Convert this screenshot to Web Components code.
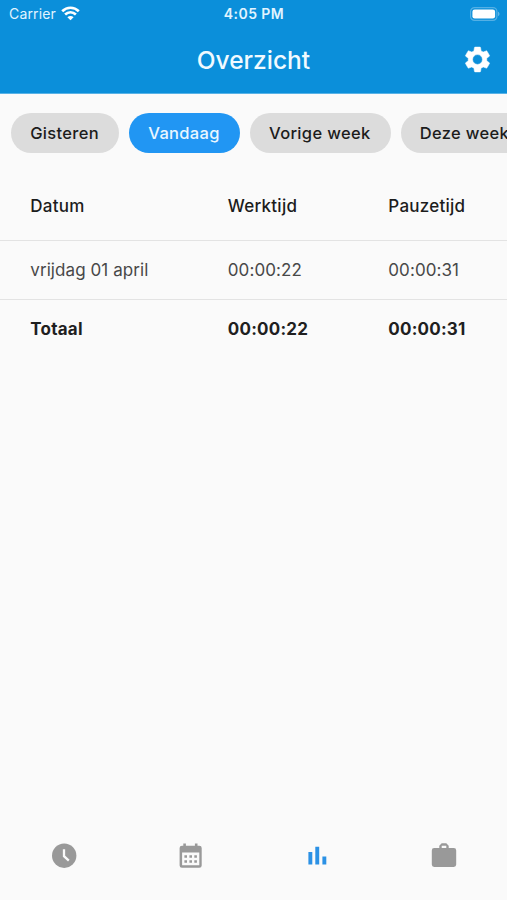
<!DOCTYPE html>
<html lang="nl">
<head>
<meta charset="utf-8">
<title>Overzicht</title>
<style>
  body {
    margin: 0;
    height: 100vh;
    overflow: hidden;
    background: #fafafa;
    font-family: Inter, Roboto, sans-serif;
  }
</style>
</head>
<body>
<overview-screen></overview-screen>

<script>
// Small helper: every component is a template cloned into an open shadow root
const define = (name, html) => {
  const template = document.createElement('template');
  template.innerHTML = html;

  customElements.define(name, class extends HTMLElement {
    constructor() {
      super();
      this.attachShadow({ mode: 'open' });
      this.shadowRoot.appendChild(template.content.cloneNode(true));
    }
  });
};

define('status-bar', `
  <style>
    :host {
      display: grid;
      grid-template-columns: 1fr auto 1fr;
      align-items: center;
      height: 27px;
      padding: 0 7px 0 9px;
      color: #e2f4ff;
      font-size: 14px;
      line-height: 27px;
    }
    .carrier { display: flex; align-items: center; gap: 5px; letter-spacing: .15px; }
    .time { margin-right: 1px; font-size: 14px; font-weight: 600; letter-spacing: .45px; }
    .battery { justify-self: end; }
    svg { display: block; }
  </style>
  <div class="carrier">
    <span>Carrier</span>
    <svg width="19" height="15" viewBox="0 0 19 15" fill="none" stroke="#fff" stroke-width="2.7">
      <path d="M1.2 5.2C6 .6 13 .6 17.8 5.2"/>
      <path d="M4.1 8.6C7.3 5.6 11.7 5.6 14.9 8.6"/>
      <path d="M9.5 14.3L6.4 11.3C8.2 9.7 10.8 9.7 12.6 11.3Z" fill="#fff" stroke="none"/>
    </svg>
  </div>
  <span class="time">4:05 PM</span>
  <svg class="battery" width="30" height="14" viewBox="0 0 30 14">
    <rect x=".6" y=".6" width="26.3" height="12.8" rx="4" fill="none" stroke="#fff" stroke-opacity=".3" stroke-width="1.2"/>
    <rect x="2.4" y="2.4" width="22.7" height="9.2" rx="2.3" fill="#fff"/>
    <path d="M28 4.8c2 .7 2 3.7 0 4.4z" fill="#fff" fill-opacity=".35"/>
  </svg>
`);

define('app-bar', `
  <style>
    :host {
      display: grid;
      grid-template-columns: 1fr auto 1fr;
      align-items: center;
      box-sizing: border-box;
      height: 66px;
      padding: 0 14px 1px;
      color: #f0faff;
    }
    h1 {
      grid-column: 2;
      margin: 0;
      font-size: 24.5px;
      font-weight: 500;
      line-height: 30px;
    }
    svg { display: block; justify-self: end; }
  </style>
  <h1><slot></slot></h1>
  <svg width="31" height="31" viewBox="0 0 24 24" fill="#fff" stroke="#fff" stroke-width=".4" stroke-linejoin="round">
    <path d="M19.14 12.94c.04-.3.06-.61.06-.94 0-.32-.02-.64-.07-.94l2.03-1.58c.18-.14.23-.41.12-.61l-1.92-3.32c-.12-.22-.37-.29-.59-.22l-2.39.96c-.5-.38-1.03-.7-1.62-.94l-.36-2.54c-.04-.24-.24-.41-.48-.41h-3.84c-.24 0-.43.17-.47.41l-.36 2.54c-.59.24-1.13.57-1.62.94l-2.39-.96c-.22-.08-.47 0-.59.22L2.74 8.87c-.12.21-.08.47.12.61l2.03 1.58c-.05.3-.09.63-.09.94s.02.64.07.94l-2.03 1.58c-.18.14-.23.41-.12.61l1.92 3.32c.12.22.37.29.59.22l2.39-.96c.5.38 1.03.7 1.62.94l.36 2.54c.05.24.24.41.48.41h3.84c.24 0 .44-.17.47-.41l.36-2.54c.59-.24 1.13-.56 1.62-.94l2.39.96c.22.08.47 0 .59-.22l1.92-3.32c.12-.22.07-.47-.12-.61l-2.01-1.58zM12 15.8a3.8 3.8 0 1 1 0-7.6 3.8 3.8 0 0 1 0 7.6z"/>
  </svg>
`);

define('filter-chip', `
  <style>
    :host {
      display: block;
      flex: none;
      box-sizing: border-box;
      height: 40px;
      padding: 0 20px 0 19.2px;
      border-radius: 20px;
      background: #dcdcdc;
      color: #1c1c1c;
      font-size: 16.5px;
      font-weight: 500;
      line-height: 40px;
      letter-spacing: .33px;
      white-space: nowrap;
    }
    :host([selected]) { background: #2196f3; color: #e9f6ff; }
  </style>
  <slot></slot>
`);

define('chip-row', `
  <style>
    :host {
      display: flex;
      gap: 10px;
      padding: 19px 0 0 11px;
      overflow: hidden;
    }
  </style>
  <slot></slot>
`);

define('time-row', `
  <style>
    :host {
      display: grid;
      grid-template-columns: 197.5px 160.5px 1fr;
      align-items: center;
      box-sizing: border-box;
      height: 59px;
      padding: 0 0 1px 30.3px;
      border-top: 1.5px solid #e3e3e3;
      color: #484848;
      font-size: 17px;
      letter-spacing: .08px;
    }
    :host([head]) { height: 69px; padding-bottom: 0; border-top: 0; color: #1c1c1c; font-weight: 500; letter-spacing: .25px; }
    :host([total]) { color: #1f1f1f; font-weight: 700; letter-spacing: .22px; }
  </style>
  <slot></slot>
`);

define('tab-bar', `
  <style>
    :host {
      display: grid;
      grid-template-columns: repeat(4, 1fr);
      justify-items: center;
      align-items: center;
      height: 88px;
      padding-left: 1px;
      color: #999;
    }
    .active { color: #2b91e5; }
    svg { display: block; }
  </style>
  <svg width="30" height="30" viewBox="0 0 30 30">
    <circle cx="15.2" cy="14.7" r="12.2" fill="currentColor"/>
    <path d="M15 8.3v6.9l4.8 4.4" fill="none" stroke="#fafafa" stroke-width="2.3"/>
  </svg>
  <svg width="30" height="30" viewBox="0.4 0 30 30" fill="currentColor">
    <path fill-rule="evenodd" d="M7.7 2.4h2.6v2.3h9V2.4h2.6v2.3h1.8a2.4 2.4 0 0 1 2.4 2.4v17.3a2.4 2.4 0 0 1-2.4 2.4H6.4A2.4 2.4 0 0 1 4 24.4V7.1a2.4 2.4 0 0 1 2.4-2.4h1.3zM6.5 11.5v12.8h17.2V11.5z"/>
    <path d="M8.8 14.2h2.6v2.6H8.8zM13.8 14.2h2.6v2.6h-2.6zM18.7 14.2h2.6v2.6h-2.6zM8.8 19.2h2.6v2.6H8.8zM13.8 19.2h2.6v2.6h-2.6zM18.7 19.2h2.6v2.6h-2.6z"/>
  </svg>
  <svg class="active" width="30" height="30" viewBox="0 0 30 30" fill="currentColor">
    <path d="M6.4 11h3.9v12.4H6.4zM13.3 5.8h3.9v17.6h-3.9zM20.4 15.5h3.9v7.9h-3.9z"/>
  </svg>
  <svg width="30" height="30" viewBox="0 0 30 30" fill="currentColor">
    <path fill-rule="evenodd" d="M12.7 2.3h4.6l2.4 2.4v2.4h5.1a2.4 2.4 0 0 1 2.4 2.4v14.1a2.4 2.4 0 0 1-2.4 2.4H5.2a2.4 2.4 0 0 1-2.4-2.4V9.5a2.4 2.4 0 0 1 2.4-2.4h5.1V4.7zM12.7 4.7v2.4h4.6V4.7z"/>
  </svg>
`);

define('overview-screen', `
  <style>
    :host {
      display: flex;
      flex-direction: column;
      height: 100vh;
      overflow: hidden;
      background: #fafafa;
    }
    header { background: #0b8fda; border-bottom: 1px solid #58b2e6; }
    main { flex: 1; }
    .table { padding-top: 18px; }
  </style>
  <header>
    <status-bar></status-bar>
    <app-bar>Overzicht</app-bar>
  </header>
  <main>
    <chip-row>
      <filter-chip>Gisteren</filter-chip>
      <filter-chip selected>Vandaag</filter-chip>
      <filter-chip>Vorige week</filter-chip>
      <filter-chip>Deze week</filter-chip>
    </chip-row>
    <div class="table">
      <time-row head><span>Datum</span><span>Werktijd</span><span>Pauzetijd</span></time-row>
      <time-row><span>vrijdag 01 april</span><span>00:00:22</span><span>00:00:31</span></time-row>
      <time-row total><span>Totaal</span><span>00:00:22</span><span>00:00:31</span></time-row>
    </div>
  </main>
  <tab-bar></tab-bar>
`);
</script>
</body>
</html>
